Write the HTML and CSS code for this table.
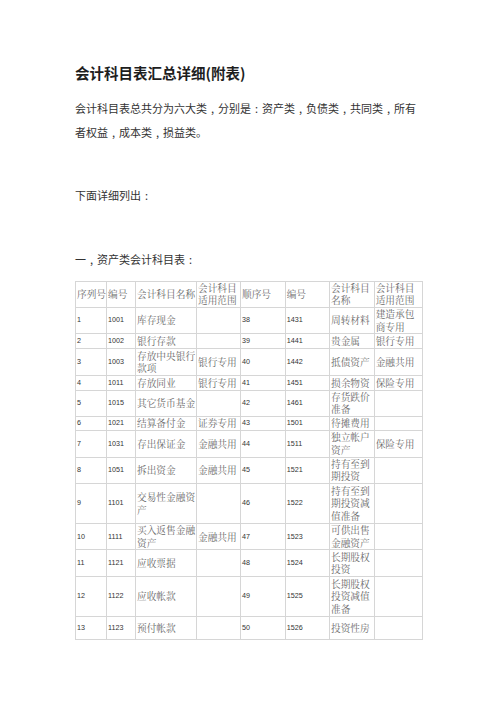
FILE: index.html
```html
<!DOCTYPE html>
<html lang="zh-CN">
<head>
<meta charset="utf-8">
<title>会计科目表汇总详细(附表)</title>
<link rel="stylesheet" href="styles.css">
</head>
<body>
<main class="page">
  <h1 class="title">会计科目表汇总详细(附表)</h1>
  <p class="para p1">会计科目表总共分为六大类<span class="pc">,</span>分别是<span class="pc">:</span>资产类<span class="pc">,</span>负债类<span class="pc">,</span>共同类<span class="pc">,</span>所有者权益<span class="pc">,</span>成本类<span class="pc">,</span>损益类。</p>
  <p class="para p2">下面详细列出<span class="pc">:</span></p>
  <p class="para p3">一<span class="pc">,</span>资产类会计科目表<span class="pc">:</span></p>
  <table class="grid">
    <colgroup>
      <col class="c1"><col class="c2"><col class="c3"><col class="c4">
      <col class="c5"><col class="c6"><col class="c7"><col class="c8">
    </colgroup>
    <tbody>
      <tr class="h2"><td>序列号</td><td>编号</td><td>会计科目名称</td><td>会计科目<br>适用范围</td><td>顺序号</td><td>编号</td><td>会计科目<br>名称</td><td>会计科目<br>适用范围</td></tr>
      <tr class="h2"><td class="n">1</td><td class="n">1001</td><td>库存现金</td><td></td><td class="n">38</td><td class="n">1431</td><td>周转材料</td><td>建造承包<br>商专用</td></tr>
      <tr class="h1"><td class="n">2</td><td class="n">1002</td><td>银行存款</td><td></td><td class="n">39</td><td class="n">1441</td><td>贵金属</td><td>银行专用</td></tr>
      <tr class="h2b"><td class="n">3</td><td class="n">1003</td><td>存放中央银行<br>款项</td><td>银行专用</td><td class="n">40</td><td class="n">1442</td><td>抵债资产</td><td>金融共用</td></tr>
      <tr class="h1"><td class="n">4</td><td class="n">1011</td><td>存放同业</td><td>银行专用</td><td class="n">41</td><td class="n">1451</td><td>损余物资</td><td>保险专用</td></tr>
      <tr class="h2"><td class="n">5</td><td class="n">1015</td><td>其它货币基金</td><td></td><td class="n">42</td><td class="n">1461</td><td>存货跌价<br>准备</td><td></td></tr>
      <tr class="h1"><td class="n">6</td><td class="n">1021</td><td>结算备付金</td><td>证券专用</td><td class="n">43</td><td class="n">1501</td><td>待摊费用</td><td></td></tr>
      <tr class="h2"><td class="n">7</td><td class="n">1031</td><td>存出保证金</td><td>金融共用</td><td class="n">44</td><td class="n">1511</td><td>独立帐户<br>资产</td><td>保险专用</td></tr>
      <tr class="h2"><td class="n">8</td><td class="n">1051</td><td>拆出资金</td><td>金融共用</td><td class="n">45</td><td class="n">1521</td><td>持有至到<br>期投资</td><td></td></tr>
      <tr class="h3"><td class="n">9</td><td class="n">1101</td><td>交易性金融资<br>产</td><td></td><td class="n">46</td><td class="n">1522</td><td>持有至到<br>期投资减<br>值准备</td><td></td></tr>
      <tr class="h2"><td class="n">10</td><td class="n">1111</td><td>买入返售金融<br>资产</td><td>金融共用</td><td class="n">47</td><td class="n">1523</td><td>可供出售<br>金融资产</td><td></td></tr>
      <tr class="h2"><td class="n">11</td><td class="n">1121</td><td>应收票据</td><td></td><td class="n">48</td><td class="n">1524</td><td>长期股权<br>投资</td><td></td></tr>
      <tr class="h3"><td class="n">12</td><td class="n">1122</td><td>应收帐款</td><td></td><td class="n">49</td><td class="n">1525</td><td>长期股权<br>投资减值<br>准备</td><td></td></tr>
      <tr class="hl"><td class="n">13</td><td class="n">1123</td><td>预付帐款</td><td></td><td class="n">50</td><td class="n">1526</td><td>投资性房</td><td></td></tr>
    </tbody>
  </table>
</main>
</body>
</html>
```

FILE: styles.css
```css
html, body {
  margin: 0;
  padding: 0;
  background: #ffffff;
}

.page {
  padding: 63px 0 40px 75px;
  font-family: "Noto Sans CJK SC", "Liberation Sans", sans-serif;
  color: #333333;
}

.title {
  margin: 0;
  font-size: 14.5px;
  line-height: 20px;
  height: 20px;
  font-weight: bold;
  color: #1e1e1e;
  white-space: nowrap;
}

.para {
  margin: 0;
  font-size: 11px;
  line-height: 24.4px;
  color: #333333;
  width: 348px;
}

.pc {
  display: inline-block;
  width: 1em;
  text-align: center;
}

.p1 { margin-top: 13px; }
.p2 { margin-top: 38.6px; }
.p3 { margin-top: 39.2px; }

.grid {
  margin-top: 9.2px;
  width: 347px;
  table-layout: fixed;
  border-collapse: collapse;
  border: 1px solid #d6d6d6;
  font-family: "Noto Serif CJK SC", "Noto Sans CJK SC", serif;
  font-size: 9.7px;
  color: #6a6a6a;
}

.c1 { width: 31px; }
.c2 { width: 29px; }
.c3 { width: 61px; }
.c4 { width: 44px; }
.c5 { width: 44.7px; }
.c6 { width: 44.3px; }
.c7 { width: 44.7px; }
.c8 { width: 48.3px; }

.grid td {
  border: 1px solid #d6d6d6;
  padding: 0 0 0 1px;
  line-height: 12.4px;
  vertical-align: middle;
  white-space: nowrap;
  overflow: hidden;
}

.grid td.n {
  font-family: "Liberation Sans", "DejaVu Sans", sans-serif;
  font-size: 7.2px;
  color: #333333;
}

.h1 { height: 14.2px; }
.h2 { height: 26.4px; }
.h2b { height: 27.8px; }
.h3 { height: 40.2px; }
.hl { height: 23px; }
```
